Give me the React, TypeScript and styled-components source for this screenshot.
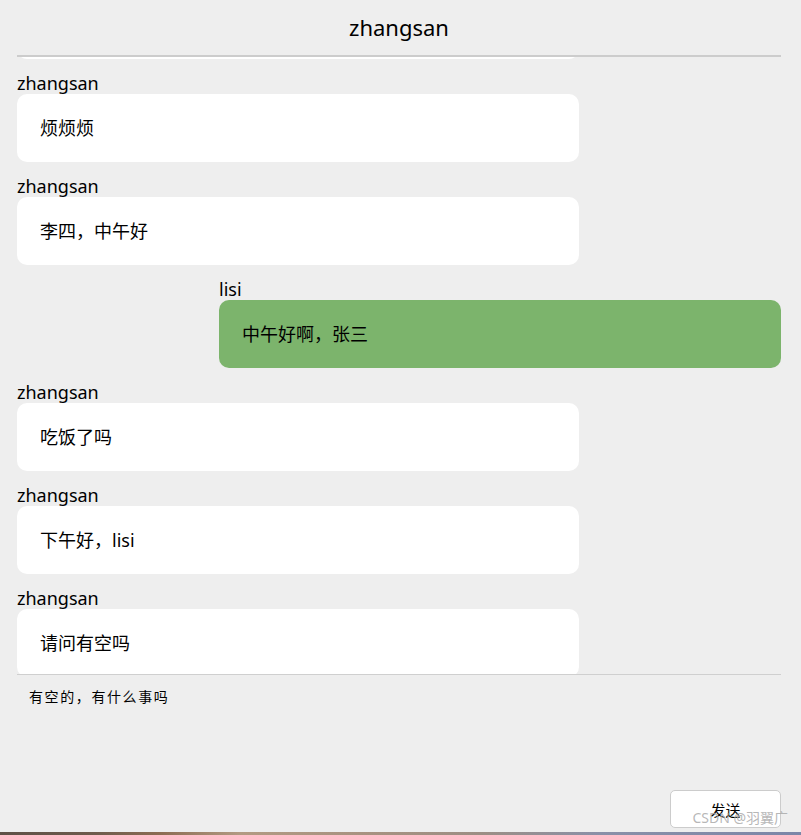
import React, { useEffect, useRef } from 'react';
import styled, { createGlobalStyle } from 'styled-components';

const GlobalStyle = createGlobalStyle`
  html, body {
    margin: 0;
    padding: 0;
    height: 100%;
    background: #eeeeee;
  }
  body {
    font-family: "Noto Sans", "Noto Sans CJK SC", sans-serif;
    color: #000;
  }
  #root {
    height: 100%;
  }
`;

// Whole chat window
const ChatWindow = styled.div`
  display: flex;
  flex-direction: column;
  height: 835px;
  background: #eeeeee;
  overflow: hidden;
`;

const ChatBody = styled.div`
  flex: 1;
  display: flex;
  flex-direction: column;
  margin: 0 20px 0 17px;
  min-height: 0;
`;

const Header = styled.header`
  height: 55px;
  line-height: 55px;
  text-align: center;
  font-size: 22px;
  border-bottom: 2px solid #cccccc;
  flex-shrink: 0;
`;

const MessageList = styled.div`
  height: 617px;
  flex-shrink: 0;
  overflow-y: auto;
  scrollbar-width: none;
  display: flex;
  flex-direction: column;
  gap: 14px;

  &::-webkit-scrollbar {
    display: none;
  }
`;

const MessageItem = styled.div<{ $mine?: boolean }>`
  width: 562px;
  align-self: ${(p) => (p.$mine ? 'flex-end' : 'flex-start')};
  display: flex;
  flex-direction: column;
  flex-shrink: 0;
`;

const Sender = styled.div`
  font-size: 18px;
  line-height: 21px;
  height: 21px;
`;

const Bubble = styled.div<{ $mine?: boolean }>`
  background: ${(p) => (p.$mine ? '#7cb46c' : '#ffffff')};
  border-radius: 10px;
  padding: 23px 23px;
  font-size: 18px;
  line-height: 22px;
  height: 68px;
  box-sizing: border-box;
`;

const InputArea = styled.div`
  flex: 1;
  display: flex;
  flex-direction: column;
  border-top: 1px solid #cfcfcf;
  padding-bottom: 4px;
`;

const TextBox = styled.textarea`
  flex: 1;
  border: none;
  outline: none;
  resize: none;
  background: transparent;
  padding: 10px 12px;
  font-family: "Noto Sans CJK SC", sans-serif;
  font-size: 14px;
  line-height: 22px;
  letter-spacing: 1.6px;
  color: #000;
`;

const ButtonRow = styled.div`
  display: flex;
  justify-content: flex-end;
  position: relative;
`;

const SendButton = styled.button`
  width: 111px;
  height: 38px;
  background: #ffffff;
  border: 1px solid #cccccc;
  border-radius: 5px;
  font-family: "Noto Sans CJK SC", sans-serif;
  font-size: 15px;
  color: #000;
  cursor: pointer;
`;

const Watermark = styled.span`
  position: absolute;
  right: -7px;
  bottom: 1px;
  font-family: "Noto Sans", "Noto Sans CJK SC", sans-serif;
  font-size: 14px;
  color: rgba(170, 170, 170, 0.85);
  pointer-events: none;
  white-space: nowrap;
`;

const DesktopStrip = styled.div`
  height: 3px;
  flex-shrink: 0;
  background: linear-gradient(
    90deg,
    #5e5046 0%,
    #6e5b4c 12%,
    #8c6c52 20%,
    #b29a82 30%,
    #a89280 45%,
    #9c8e84 60%,
    #8a90a8 75%,
    #7c86a8 100%
  );
`;

interface Message {
  from: string;
  text: string;
}

const me = 'lisi';

const messages: Message[] = [
  { from: 'zhangsan', text: '你好' },
  { from: 'zhangsan', text: '在吗' },
  { from: 'zhangsan', text: '烦烦烦' },
  { from: 'zhangsan', text: '李四，中午好' },
  { from: 'lisi', text: '中午好啊，张三' },
  { from: 'zhangsan', text: '吃饭了吗' },
  { from: 'zhangsan', text: '下午好，lisi' },
  { from: 'zhangsan', text: '请问有空吗' },
];

const App: React.FC = () => {
  const listRef = useRef<HTMLDivElement>(null);

  useEffect(() => {
    const el = listRef.current;
    if (el) {
      // scrolled almost to the end: last bubble slightly clipped, as in the capture
      el.scrollTop = el.scrollHeight - el.clientHeight - 3;
    }
  }, []);

  return (
    <>
      <GlobalStyle />
      <ChatWindow>
        <ChatBody>
          <Header>zhangsan</Header>
          <MessageList ref={listRef}>
            {messages.map((m, i) => (
              <MessageItem key={i} $mine={m.from === me}>
                <Sender>{m.from}</Sender>
                <Bubble $mine={m.from === me}>{m.text}</Bubble>
              </MessageItem>
            ))}
          </MessageList>
          <InputArea>
            <TextBox defaultValue="有空的，有什么事吗" />
            <ButtonRow>
              <SendButton>发送</SendButton>
              <Watermark>CSDN @羽翼广</Watermark>
            </ButtonRow>
          </InputArea>
        </ChatBody>
        <DesktopStrip />
      </ChatWindow>
    </>
  );
};

export default App;
